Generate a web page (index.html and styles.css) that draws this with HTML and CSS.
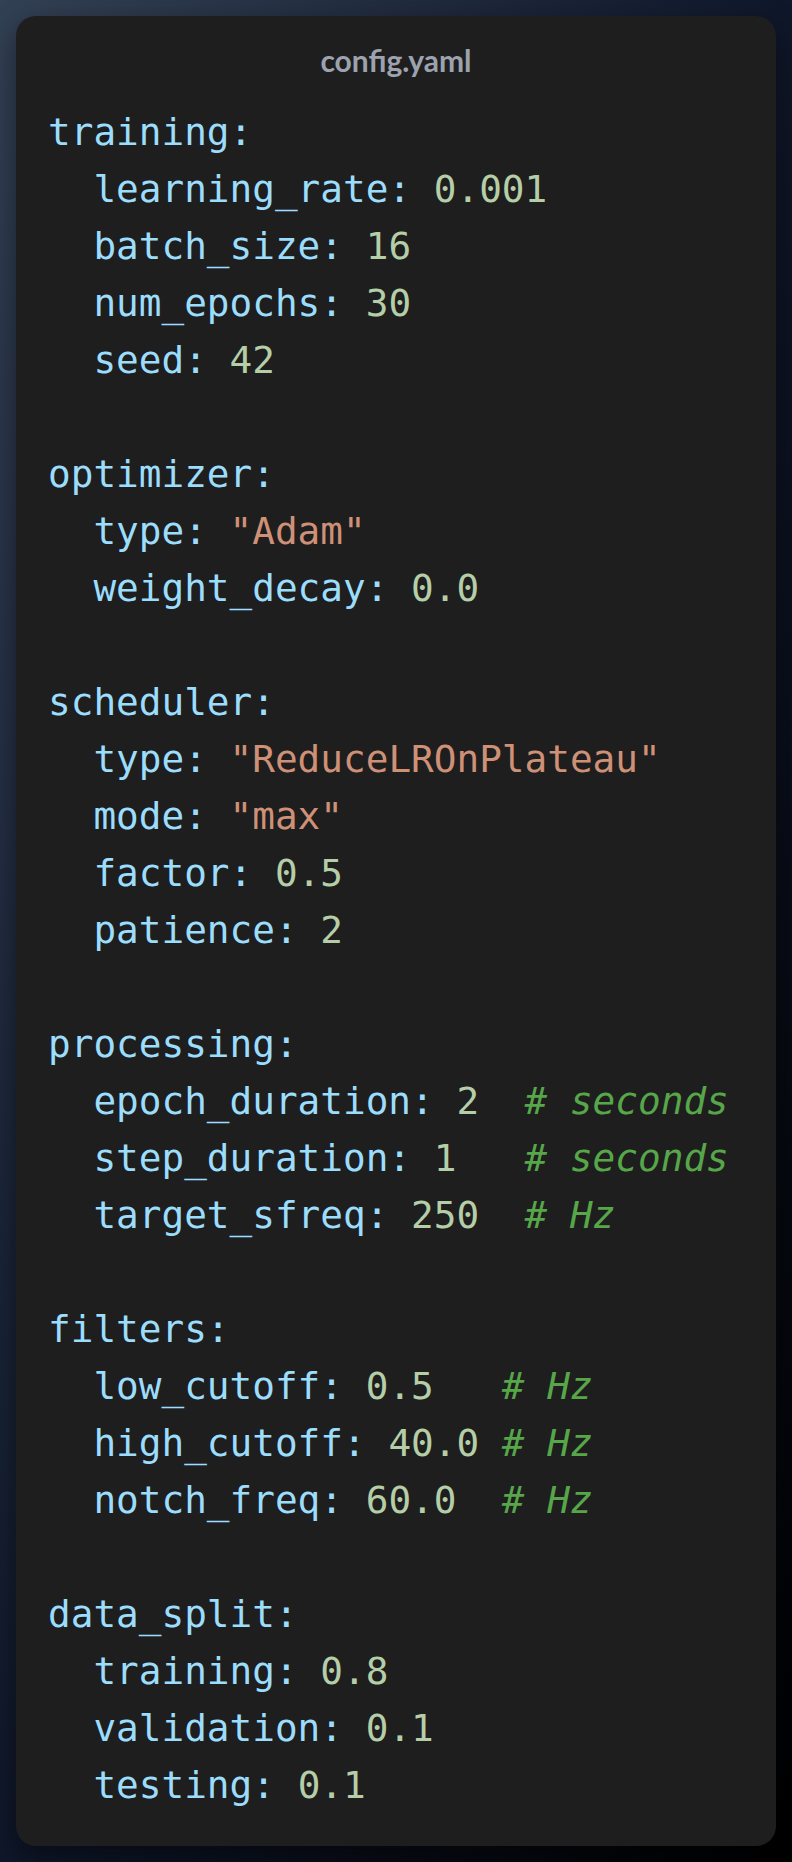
FILE: index.html
```html
<!DOCTYPE html>
<html lang="en">
<head>
<meta charset="utf-8">
<title>config.yaml</title>
<link rel="stylesheet" href="styles.css">
</head>
<body>
<div class="card">
<div class="title">config.yaml</div>
<pre class="code"><span class="k">training:</span>
  <span class="k">learning_rate:</span> <span class="n">0.001</span>
  <span class="k">batch_size:</span> <span class="n">16</span>
  <span class="k">num_epochs:</span> <span class="n">30</span>
  <span class="k">seed:</span> <span class="n">42</span>

<span class="k">optimizer:</span>
  <span class="k">type:</span> <span class="s">"Adam"</span>
  <span class="k">weight_decay:</span> <span class="n">0.0</span>

<span class="k">scheduler:</span>
  <span class="k">type:</span> <span class="s">"ReduceLROnPlateau"</span>
  <span class="k">mode:</span> <span class="s">"max"</span>
  <span class="k">factor:</span> <span class="n">0.5</span>
  <span class="k">patience:</span> <span class="n">2</span>

<span class="k">processing:</span>
  <span class="k">epoch_duration:</span> <span class="n">2</span>  <span class="c"># seconds</span>
  <span class="k">step_duration:</span> <span class="n">1</span>   <span class="c"># seconds</span>
  <span class="k">target_sfreq:</span> <span class="n">250</span>  <span class="c"># Hz</span>

<span class="k">filters:</span>
  <span class="k">low_cutoff:</span> <span class="n">0.5</span>   <span class="c"># Hz</span>
  <span class="k">high_cutoff:</span> <span class="n">40.0</span> <span class="c"># Hz</span>
  <span class="k">notch_freq:</span> <span class="n">60.0</span>  <span class="c"># Hz</span>

<span class="k">data_split:</span>
  <span class="k">training:</span> <span class="n">0.8</span>
  <span class="k">validation:</span> <span class="n">0.1</span>
  <span class="k">testing:</span> <span class="n">0.1</span></pre>
</div>
</body>
</html>
```

FILE: styles.css
```css
html, body {
  margin: 0;
  padding: 0;
}

body {
  min-height: 1862px;
  box-sizing: border-box;
  padding: 16px;
  background: linear-gradient(to bottom right, #334155 0%, #0f172a 50%, #000000 100%);
}

.card {
  background: #1e1e1e;
  border-radius: 20px;
  padding: 24px 32px 32px 32px;
  box-shadow: 0 10px 30px rgba(0, 0, 0, 0.45);
}

.title {
  font-family: Lato, "Noto Sans", sans-serif;
  font-weight: 700;
  font-size: 30px;
  line-height: 40px;
  height: 40px;
  color: #9ca3af;
  text-align: center;
}

.code {
  margin: 24px 0 0 0;
  font-family: "DejaVu Sans Mono", "Liberation Mono", monospace;
  font-size: 37.7px;
  line-height: 57px;
  color: #9cdcfe;
  white-space: pre;
}

.k { color: #9cdcfe; }
.n { color: #b5cea8; }
.s { color: #ce9178; }
.c { color: #57a64a; font-style: italic; }
```
